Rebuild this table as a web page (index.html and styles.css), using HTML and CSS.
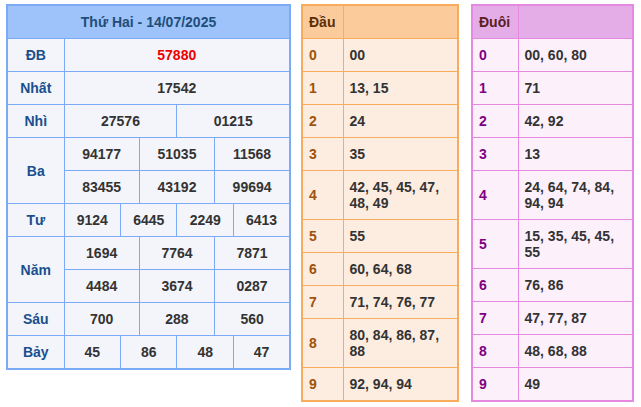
FILE: index.html
```html
<!DOCTYPE html>
<html lang="vi">
<head>
<meta charset="utf-8">
<title>Kết quả xổ số</title>
<link rel="stylesheet" href="styles.css">
</head>
<body>
<div class="wrap">
  <table class="kq">
    <colgroup>
      <col class="c-label">
      <col span="12" class="c-unit">
    </colgroup>
    <tr><th colspan="13" class="head">Thứ Hai - 14/07/2025</th></tr>
    <tr><td class="lbl">ĐB</td><td colspan="12" class="db">57880</td></tr>
    <tr><td class="lbl">Nhất</td><td colspan="12">17542</td></tr>
    <tr><td class="lbl">Nhì</td><td colspan="6">27576</td><td colspan="6">01215</td></tr>
    <tr><td class="lbl" rowspan="2">Ba</td><td colspan="4">94177</td><td colspan="4">51035</td><td colspan="4">11568</td></tr>
    <tr><td colspan="4">83455</td><td colspan="4">43192</td><td colspan="4">99694</td></tr>
    <tr><td class="lbl">Tư</td><td colspan="3">9124</td><td colspan="3">6445</td><td colspan="3">2249</td><td colspan="3">6413</td></tr>
    <tr><td class="lbl" rowspan="2">Năm</td><td colspan="4">1694</td><td colspan="4">7764</td><td colspan="4">7871</td></tr>
    <tr><td colspan="4">4484</td><td colspan="4">3674</td><td colspan="4">0287</td></tr>
    <tr><td class="lbl">Sáu</td><td colspan="4">700</td><td colspan="4">288</td><td colspan="4">560</td></tr>
    <tr><td class="lbl">Bảy</td><td colspan="3">45</td><td colspan="3">86</td><td colspan="3">48</td><td colspan="3">47</td></tr>
  </table>

  <table class="lt dau">
    <colgroup><col class="c-key"><col></colgroup>
    <tr><th>Đầu</th><th></th></tr>
    <tr><td class="key">0</td><td>00</td></tr>
    <tr><td class="key">1</td><td>13, 15</td></tr>
    <tr><td class="key">2</td><td>24</td></tr>
    <tr><td class="key">3</td><td>35</td></tr>
    <tr><td class="key">4</td><td>42, 45, 45, 47, 48, 49</td></tr>
    <tr><td class="key">5</td><td>55</td></tr>
    <tr><td class="key">6</td><td>60, 64, 68</td></tr>
    <tr><td class="key">7</td><td>71, 74, 76, 77</td></tr>
    <tr><td class="key">8</td><td>80, 84, 86, 87, 88</td></tr>
    <tr><td class="key">9</td><td>92, 94, 94</td></tr>
  </table>

  <table class="lt duoi">
    <colgroup><col class="c-key2"><col></colgroup>
    <tr><th>Đuôi</th><th></th></tr>
    <tr><td class="key">0</td><td>00, 60, 80</td></tr>
    <tr><td class="key">1</td><td>71</td></tr>
    <tr><td class="key">2</td><td>42, 92</td></tr>
    <tr><td class="key">3</td><td>13</td></tr>
    <tr><td class="key">4</td><td>24, 64, 74, 84, 94, 94</td></tr>
    <tr><td class="key">5</td><td>15, 35, 45, 45, 55</td></tr>
    <tr><td class="key">6</td><td>76, 86</td></tr>
    <tr><td class="key">7</td><td>47, 77, 87</td></tr>
    <tr><td class="key">8</td><td>48, 68, 88</td></tr>
    <tr><td class="key">9</td><td>49</td></tr>
  </table>
</div>
</body>
</html>
```

FILE: styles.css
```css
* { box-sizing: border-box; }
html, body { margin: 0; padding: 0; background: #ffffff; }
body {
  font-family: "Liberation Sans", Arial, sans-serif;
  font-size: 14px;
  font-weight: bold;
  color: #333333;
}
.wrap {
  display: flex;
  align-items: flex-start;
  padding: 4px 0 0 6px;
}
table {
  border-collapse: collapse;
  table-layout: fixed;
}
th, td {
  padding: 8px 6px;
  line-height: 16px;
  height: 33px;
}

/* Left results table */
.kq {
  width: 285px;
  border: 2px solid #7baaf7;
  background: #f3f5fa;
}
.kq .c-label { width: 57px; }
.kq td, .kq th {
  border: 1px solid #7baaf7;
  text-align: center;
  padding: 8px 0;
}
.kq .head {
  background: #9ec2fa;
  color: #1f4e79;
  font-size: 14px;
}
.kq .lbl { color: #1a4f8e; }
.kq .db { color: #ee0000; }

/* Loto tables */
.lt {
  border-width: 2px;
  border-style: solid;
}
.lt td, .lt th {
  border-width: 1px;
  border-style: solid;
  text-align: left;
}
.dau {
  width: 158px;
  margin-left: 10px;
  border-color: #f9ac5e;
  background: #fdede1;
}
.dau .c-key { width: 41px; }
.dau td, .dau th { border-color: #f9ac5e; }
.dau th { background: #fbcb9b; color: #5a2e0a; }
.dau .key { color: #a0520a; }

.duoi {
  width: 163px;
  margin-left: 12px;
  border-color: #e58ae0;
  background: #fcf0fb;
}
.duoi .c-key2 { width: 46px; }
.duoi td, .duoi th { border-color: #e58ae0; }
.duoi th { background: #e5ade8; color: #5a2020; }
.duoi .key { color: #800080; }
```
